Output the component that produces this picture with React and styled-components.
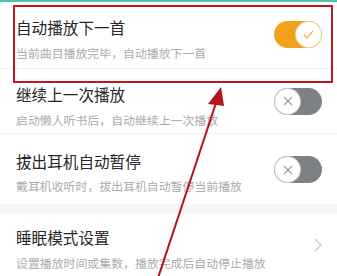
import React from "react";
import styled, { createGlobalStyle } from "styled-components";

const Global = createGlobalStyle`
  html, body { margin: 0; padding: 0; background: #fff; }
  body { width: 337px; height: 276px; overflow: hidden; font-family: "Noto Sans CJK SC", "Noto Sans", sans-serif; }
`;

const Page = styled.div`
  position: relative;
  width: 337px;
  height: 276px;
  overflow: hidden;
  background: #fff;
`;

const TopBar = styled.div`
  height: 2px;
  background: #4fc2a6;
`;

const Row = styled.div`
  height: ${(p) => p.$h}px;
  display: flex;
  align-items: center;
  padding: 0 15px 0 16px;
  border-bottom: ${(p) => (p.$last ? "none" : "1px solid #f1f1f1")};
  box-sizing: border-box;
`;

const Texts = styled.div`
  flex: 1;
  align-self: stretch;
  display: flex;
  flex-direction: column;
  gap: 9.5px;
  padding-top: ${(p) => p.$pt}px;
`;

const Title = styled.div`
  font-size: 15.6px;
  line-height: 18px;
  color: #262626;
  white-space: nowrap;
`;

const Sub = styled.div`
  font-size: 11.9px;
  line-height: 14px;
  color: #ababab;
  white-space: nowrap;
`;

const Band = styled.div`
  height: 10px;
  background: #f5f6f8;
`;

const Track = styled.div`
  width: 48px;
  height: 27px;
  border-radius: 14px;
  background: ${(p) => (p.$on ? "#f2a11c" : "#7e8184")};
  display: flex;
  align-items: center;
  justify-content: ${(p) => (p.$on ? "flex-end" : "flex-start")};
  padding: 0 1px;
  box-sizing: border-box;
  margin-top: ${(p) => p.$mt || 0}px;
`;

const Knob = styled.div`
  width: 25px;
  height: 25px;
  border-radius: 50%;
  background: #fff;
  box-shadow: 0 0 0 1px ${(p) => (p.$on ? "#f6d39a" : "#c9cacc")};
  display: flex;
  align-items: center;
  justify-content: center;
`;

const Chevron = styled.div`
  width: 48px;
  display: flex;
  justify-content: flex-end;
`;

const Annotation = styled.div`
  position: absolute;
  left: 13px;
  top: 5px;
  width: 320px;
  height: 78px;
  border: 2px solid #c4161f;
  box-sizing: border-box;
  pointer-events: none;
`;

const ArrowSvg = styled.svg`
  position: absolute;
  left: 0;
  top: 0;
  pointer-events: none;
`;

function Toggle({ on, mt }) {
  return (
    <Track $on={on} $mt={mt}>
      <Knob $on={on}>
        {on ? (
          <svg width="13" height="13" viewBox="0 0 13 13">
            <path d="M2 6.8 L5.2 10 L11 3" fill="none" stroke="#f0a030" strokeWidth="1.1" />
          </svg>
        ) : (
          <svg width="12" height="12" viewBox="0 0 12 12">
            <path d="M2 2 L10 10 M10 2 L2 10" fill="none" stroke="#9a9a9a" strokeWidth="1.1" />
          </svg>
        )}
      </Knob>
    </Track>
  );
}

const items = [
  { t: "自动播放下一首", s: "当前曲目播放完毕，自动播放下一首", on: true, h: 67, pt: 16, mt: -2 },
  { t: "继续上一次播放", s: "启动懒人听书后，自动继续上一次播放", on: false, h: 65, pt: 16, mt: 0 },
  { t: "拔出耳机自动暂停", s: "戴耳机收听时，拔出耳机自动暂停当前播放", on: false, h: 70, pt: 17.5, mt: 1, last: true },
];

export default function App() {
  return (
    <Page>
      <Global />
      <TopBar />
      {items.map((it) => (
        <Row key={it.t} $h={it.h} $last={it.last}>
          <Texts $pt={it.pt}>
            <Title>{it.t}</Title>
            <Sub>{it.s}</Sub>
          </Texts>
          <Toggle on={it.on} mt={it.mt} />
        </Row>
      ))}
      <Band />
      <Row $h={62} $last>
        <Texts $pt={14}>
          <Title>睡眠模式设置</Title>
          <Sub>设置播放时间或集数，播放完成后自动停止播放</Sub>
        </Texts>
        <Chevron>
          <svg width="8" height="14" viewBox="0 0 8 14">
            <path d="M1 1 L7 7 L1 13" fill="none" stroke="#c8c8c8" strokeWidth="1.1" />
          </svg>
        </Chevron>
      </Row>
      <Annotation />
      <ArrowSvg width="337" height="276" viewBox="0 0 337 276">
        <line x1="158" y1="278" x2="217" y2="100" stroke="#b5121b" strokeWidth="2" />
        <polygon points="221,87 208,104 224,106" fill="#b5121b" />
      </ArrowSvg>
    </Page>
  );
}
